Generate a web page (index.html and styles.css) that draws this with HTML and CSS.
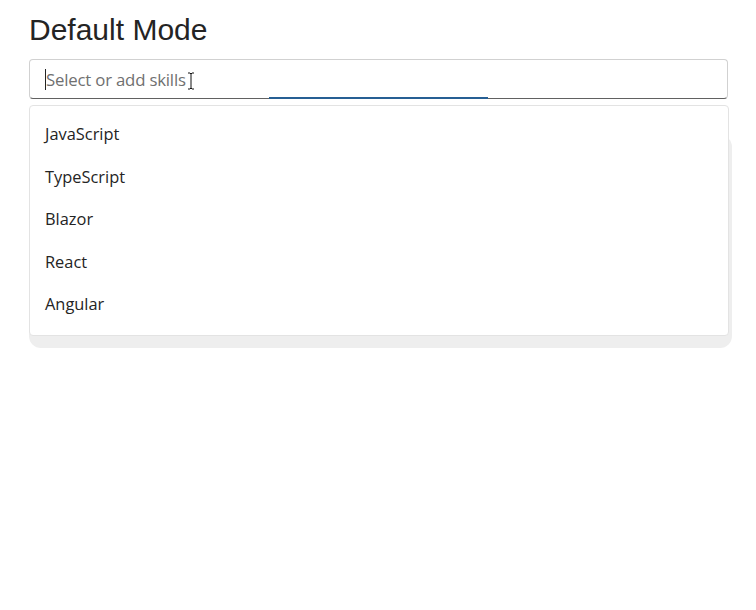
FILE: index.html
```html
<!DOCTYPE html>
<html lang="en">
<head>
    <meta charset="UTF-8">
    <meta name="viewport" content="width=device-width, initial-scale=1.0">
    <title>Default Mode</title>
    <link rel="stylesheet" href="styles.css">
</head>
<body>
    <div class="container">
        <h1>Default Mode</h1>

        <div class="combo">
            <div class="combo-input">
                <span class="caret"></span>
                <span class="placeholder">Select or add skills</span>
                <svg class="ibeam" width="8" height="18" viewBox="0 0 8 18">
                    <path d="M1 1h2l1 1 1-1h2M4 2v14M1 17h2l1-1 1 1h2" fill="none" stroke="#111" stroke-width="1"/>
                </svg>
            </div>

            <div class="popup">
                <div class="popup-shade"></div>
                <ul class="options">
                    <li>JavaScript</li>
                    <li>TypeScript</li>
                    <li>Blazor</li>
                    <li>React</li>
                    <li>Angular</li>
                </ul>
            </div>
        </div>
    </div>
</body>
</html>
```

FILE: styles.css
```css
body {
    margin: 0;
    background: #fff;
    font-family: "Open Sans", "Noto Sans", sans-serif;
}

.container {
    padding: 0 25px 0 29px;
}

h1 {
    margin: 0;
    padding-top: 12px;
    font-family: "Liberation Sans", Arial, sans-serif;
    font-size: 30px;
    font-weight: 400;
    line-height: 36px;
    color: #242424;
}

.combo {
    margin-top: 11px;
    width: 699px;
}

.combo-input {
    position: relative;
    display: flex;
    align-items: center;
    height: 38px;
    padding-left: 15px;
    border: 1px solid #d1d1d1;
    border-bottom-color: #616161;
    border-radius: 4px;
}

/* focus underline, still growing out from the middle */
.combo-input::after {
    content: "";
    position: absolute;
    left: 239px;
    bottom: -1px;
    width: 219px;
    height: 2px;
    background: #265f94;
}

.caret {
    width: 1px;
    height: 21px;
    background: #242424;
}

.placeholder {
    font-size: 16.8px;
    line-height: 22px;
    padding-top: 1px;
    color: #707070;
    letter-spacing: -0.2px;
}

.ibeam {
    position: absolute;
    left: 157px;
    top: 12px;
}

.popup {
    position: relative;
    margin-top: 6px;
    width: 700px;
    padding-bottom: 14px;
}

/* soft grey layer that peeks out right and below the list */
.popup-shade {
    position: absolute;
    left: 0;
    right: -3px;
    top: 30px;
    bottom: 2px;
    background: #eeeeee;
    border-radius: 12px;
}

.options {
    position: relative;
    list-style: none;
    margin: 0;
    padding: 7px 0 9px;
    background: #fff;
    border: 1px solid #e3e3e3;
    border-radius: 4px;
}

.options li {
    height: 42.6px;
    line-height: 42px;
    padding-left: 15px;
    font-size: 16.4px;
    color: #242424;
}
```
